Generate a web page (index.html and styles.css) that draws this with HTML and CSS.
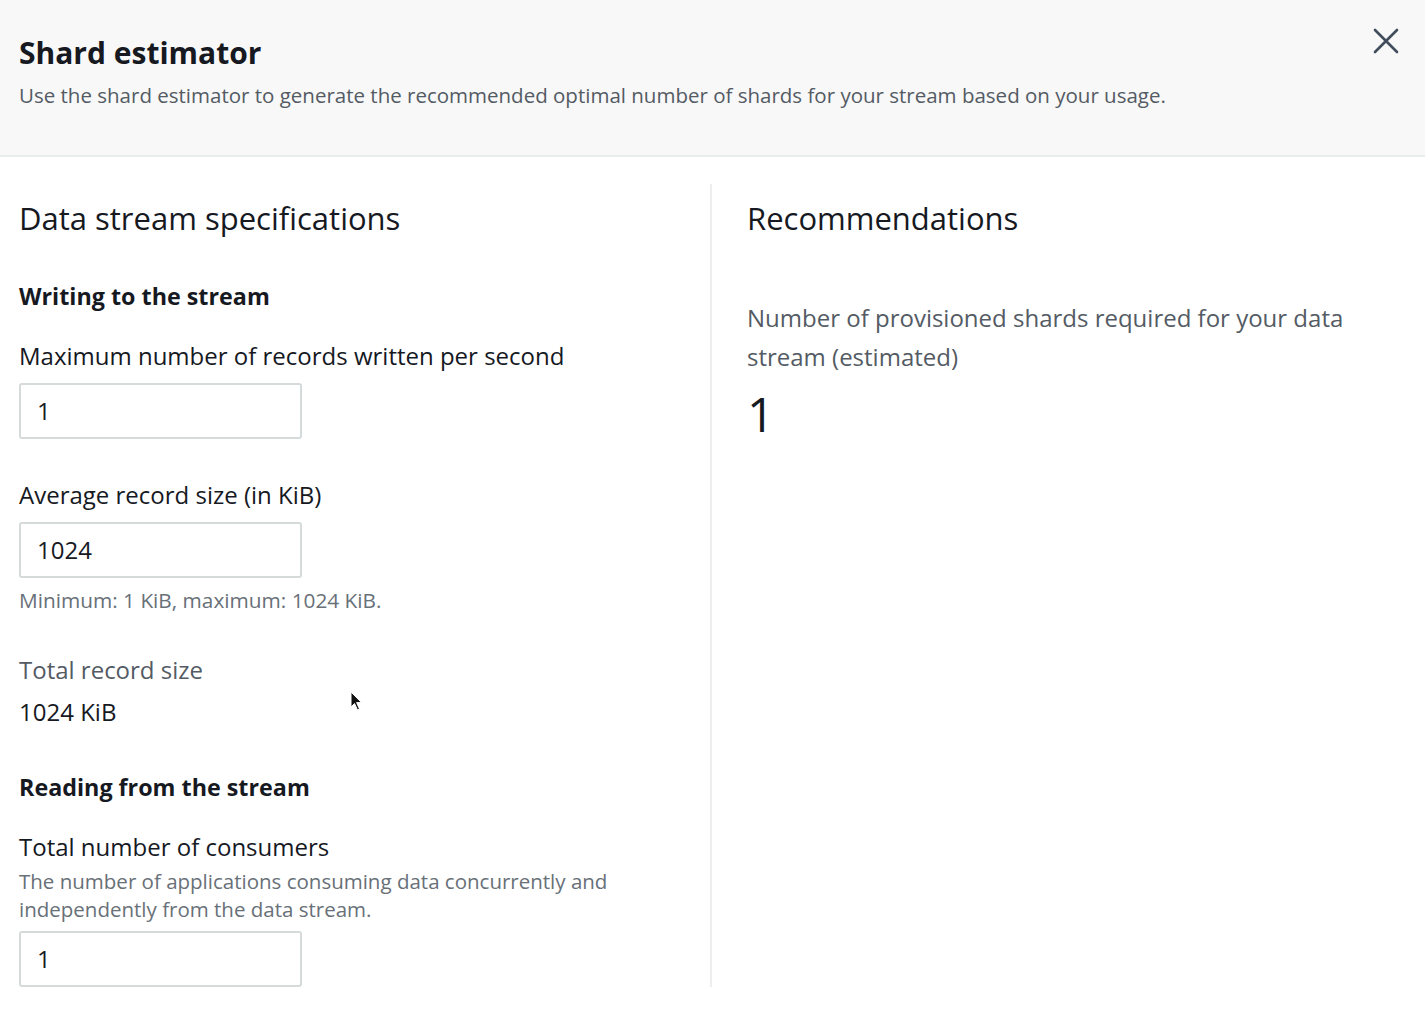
FILE: index.html
```html
<!DOCTYPE html>
<html lang="en">
<head>
<meta charset="utf-8">
<title>Shard estimator</title>
<link rel="stylesheet" href="styles.css">
</head>
<body>
<div class="modal">
  <header class="modal-header">
    <div class="header-text">
      <h1 class="title">Shard estimator</h1>
      <p class="subtitle">Use the shard estimator to generate the recommended optimal number of shards for your stream based on your usage.</p>
    </div>
    <button class="close" aria-label="Close">
      <svg width="26" height="26" viewBox="0 0 26 26"><path d="M2 2 L24 24 M24 2 L2 24" stroke="#414d5c" stroke-width="2.6" stroke-linecap="round" fill="none"/></svg>
    </button>
  </header>
  <main class="modal-body">
    <section class="col col-left">
      <h2 class="section-title">Data stream specifications</h2>
      <h3 class="group-title">Writing to the stream</h3>
      <div class="field">
        <label class="label">Maximum number of records written per second</label>
        <div class="input">1</div>
      </div>
      <div class="field field-gap">
        <label class="label">Average record size (in KiB)</label>
        <div class="input">1024</div>
        <div class="hint">Minimum: 1 KiB, maximum: 1024 KiB.</div>
      </div>
      <div class="kv">
        <div class="kv-key">Total record size</div>
        <div class="kv-value">1024 KiB</div>
        <svg class="cursor" width="14" height="22" viewBox="0 0 14 22"><path d="M1 1 L1 16 L4.5 12.5 L7.5 19 L9.5 18 L6.6 11.6 L11.5 11.6 Z" fill="#111" stroke="#fff" stroke-width="1"/></svg>
      </div>
      <h3 class="group-title group-2">Reading from the stream</h3>
      <div class="field">
        <label class="label">Total number of consumers</label>
        <div class="desc">The number of applications consuming data concurrently and independently from the data stream.</div>
        <div class="input">1</div>
      </div>
    </section>
    <section class="col col-right">
      <h2 class="section-title">Recommendations</h2>
      <p class="rec-label">Number of provisioned shards required for your data stream (estimated)</p>
      <div class="rec-value">1</div>
    </section>
  </main>
</div>
</body>
</html>
```
FILE: styles.css
```css
* { box-sizing: border-box; }
html, body { margin: 0; padding: 0; background: #fff; }
body {
  font-family: "Open Sans", "Noto Sans", sans-serif;
  color: #16191f;
  width: 1425px;
  height: 1014px;
  overflow: hidden;
}
.modal-header {
  background: #f8f8f8;
  border-bottom: 2px solid #eaeded;
  height: 157px;
  display: flex;
  justify-content: space-between;
  padding: 33px 26px 0 19px;
}
.title {
  margin: 0;
  font-size: 30px;
  font-weight: 700;
  line-height: 40px;
  color: #16191f;
}
.subtitle {
  margin: 8px 0 0;
  font-size: 20.5px;
  line-height: 28px;
  color: #545b64;
}
.close {
  background: none;
  border: 0;
  padding: 0;
  width: 26px;
  height: 26px;
  margin-top: -5px;
  cursor: pointer;
}
.modal-body {
  display: grid;
  grid-template-columns: 712px 1fr;
  padding-top: 40px;
}
.col-left {
  padding: 13px 0 0 19px;
  border-right: 2px solid #eeeeee;
  margin-top: -13px;
}
.col-right { padding-left: 35px; }
.section-title {
  margin: 0;
  font-size: 31px;
  font-weight: 400;
  line-height: 42px;
}
.group-title {
  margin: 40px 0 0;
  font-size: 23.3px;
  font-weight: 700;
  line-height: 34px;
}
.group-2 { margin-top: 41px; }
.field { margin-top: 26px; }
.field-gap { margin-top: 39px; }
.label {
  display: block;
  font-size: 24px;
  line-height: 34px;
}
.input {
  margin-top: 10px;
  width: 283px;
  height: 56px;
  border: 2px solid #d5dbdb;
  border-radius: 3px;
  padding: 0 16px;
  font-size: 24px;
  line-height: 52px;
}
.hint {
  margin-top: 8px;
  font-size: 20.8px;
  line-height: 28px;
  color: #687078;
}
.kv { margin-top: 39px; position: relative; }
.kv-key {
  font-size: 24px;
  line-height: 34px;
  color: #545b64;
}
.kv-value {
  margin-top: 8px;
  font-size: 24px;
  line-height: 34px;
}
.cursor { position: absolute; left: 331px; top: 38px; }
.desc {
  margin-top: 3px;
  max-width: 610px;
  font-size: 20.5px;
  line-height: 28px;
  color: #687078;
}
.field .desc + .input { margin-top: 8px; }
.rec-label {
  margin: 59px 0 0;
  font-size: 24px;
  line-height: 39px;
  color: #545b64;
  max-width: 600px;
}
.rec-value {
  margin-top: 8px;
  font-size: 48px;
  line-height: 60px;
}
```
